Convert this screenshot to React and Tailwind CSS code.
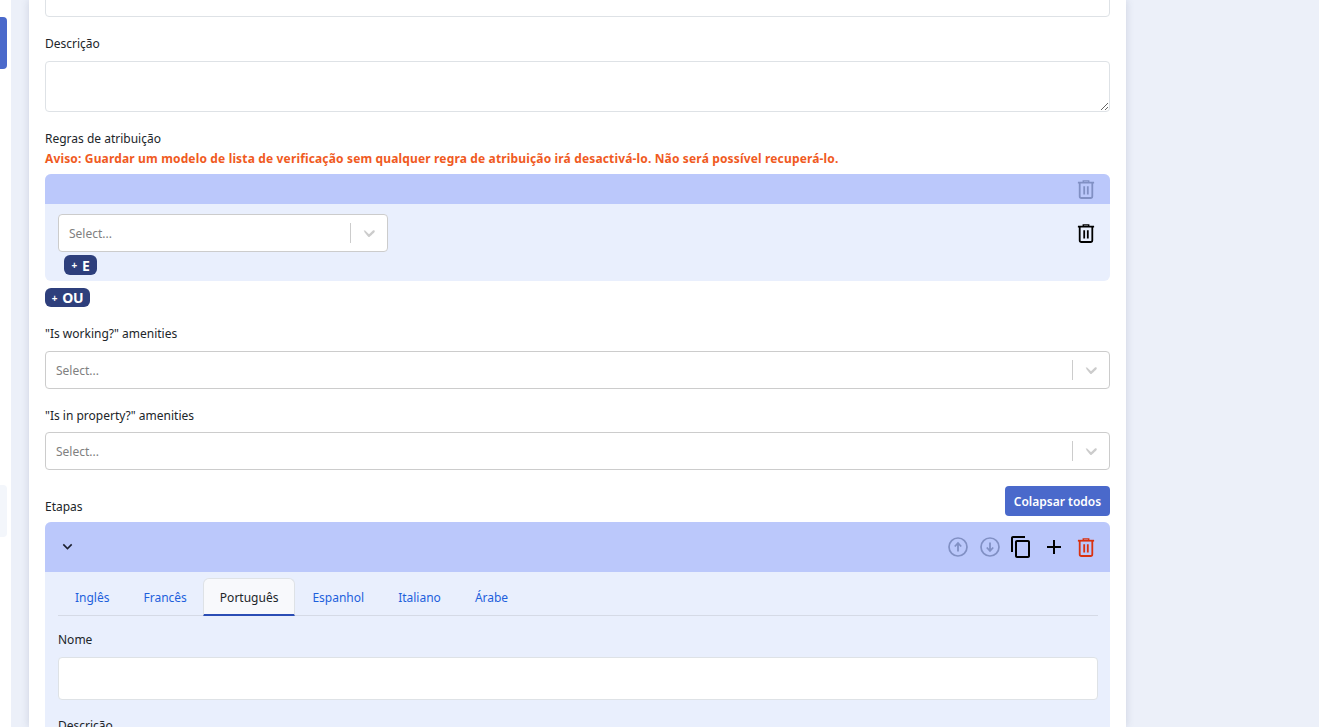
import React from 'react';
import { MdOutlineContentCopy, MdAdd, MdKeyboardArrowDown } from 'react-icons/md';

const font = "font-['Noto_Sans','Open_Sans',sans-serif]";

const TrashIcon = ({ className }) => (
  <svg viewBox="0 0 20 22" fill="none" stroke="currentColor" strokeWidth="2" className={className}>
    <path d="M1 4h18" />
    <path d="M7 4V2h6v2" strokeWidth="1.6" />
    <path d="M3 4v15a2 2 0 0 0 2 2h10a2 2 0 0 0 2-2V4" />
    <path d="M8 8v9M12 8v9" />
  </svg>
);

const CircleArrow = ({ down }) => (
  <svg viewBox="0 0 20 20" fill="none" stroke="currentColor" className="h-5 w-5 text-[#8190c4]">
    <circle cx="10" cy="10" r="9" strokeWidth="1.7" />
    {down ? (
      <path d="M10 5.5v8M6.8 10.5 10 14l3.2-3.5" strokeWidth="1.8" />
    ) : (
      <path d="M10 14.5v-8M6.8 9.5 10 6l3.2 3.5" strokeWidth="1.8" />
    )}
  </svg>
);

const SelectBox = () => (
  <div className="flex h-[38px] w-full items-center rounded border border-[#cccccc] bg-white">
    <span className="flex-1 pt-[2px] pl-[10px] text-xs text-[#808080]">Select...</span>
    <span className="h-5 w-px bg-[#cccccc]" />
    <svg viewBox="0 0 20 20" className="mx-2 h-5 w-5 fill-[#cccccc]">
      <path d="M4.516 7.548c.436-.446 1.043-.481 1.576 0L10 11.295l3.908-3.747c.533-.481 1.141-.446 1.574 0 .436.445.408 1.197 0 1.615-.406.418-4.695 4.502-4.695 4.502a1.095 1.095 0 0 1-1.576 0S5.922 9.581 5.516 9.163c-.409-.418-.436-1.17 0-1.615z" />
    </svg>
  </div>
);

const Label = ({ children, className = '' }) => (
  <label className={`block h-[18px] text-xs leading-[20px] text-[#212529] ${className}`}>{children}</label>
);

const tabs = ['Inglês', 'Francês', 'Português', 'Espanhol', 'Italiano', 'Árabe'];

export default function App() {
  return (
    <div className={`flex h-[727px] overflow-hidden bg-[#ecf0f9] ${font}`}>
      {/* collapsed sidebar */}
      <aside className="flex w-[11px] shrink-0 flex-col bg-white pt-[17px]">
        <div className="h-[52px] w-[7px] rounded-r bg-[#4a69cb]" />
        <div className="mt-[416px] h-[52px] w-[7px] rounded-r bg-[#f3f6fb]" />
      </aside>

      <main className="ml-[18px] h-[727px] w-[1097px] shrink-0 overflow-hidden bg-white px-4 shadow-[0_0_8px_rgba(60,70,110,0.18)]">
        <div className="-mt-6 h-[41px] rounded border border-[#dee2e6] bg-white" />

        <Label className="mt-[17px]">Descrição</Label>
        <textarea className="mt-[9px] block h-[51px] w-full rounded border border-[#dee2e6] bg-white" />

        <Label className="mt-[17px]">Regras de atribuição</Label>
        <p className="mt-[2px] h-[18px] text-xs leading-[20px] font-bold tracking-[0.15px] text-[#f05a22]">
          Aviso: Guardar um modelo de lista de verificação sem qualquer regra de atribuição irá desactivá-lo. Não será possível recuperá-lo.
        </p>

        <section className="mt-[7px] overflow-hidden rounded-md bg-[#e9effd]">
          <div className="flex h-[30px] items-center justify-end bg-[#bbc8fb] pr-[15px]">
            <TrashIcon className="h-5 w-[18px] text-[#8190c4]" />
          </div>
          <div className="flex h-[77px] items-start justify-between pt-[10px] pr-[15px] pl-[13px]">
            <div>
              <div className="w-[330px]">
                <SelectBox />
              </div>
              <button className="mt-[3px] ml-[6px] flex h-5 w-[33px] items-center justify-center gap-[5px] rounded-md bg-[#2e3f7c] pt-px text-sm font-bold tracking-tight text-white">
                <span className="text-[10px]">+</span>E
              </button>
            </div>
            <TrashIcon className="mt-[9px] h-5 w-[18px] text-black" />
          </div>
        </section>

        <button className="mt-[7px] flex h-[19px] w-[45px] items-center justify-center gap-[5px] rounded-md bg-[#2e3f7c] pt-px text-sm font-bold tracking-tight text-white">
          <span className="text-[10px]">+</span>OU
        </button>

        <Label className="mt-[17px]">"Is working?" amenities</Label>
        <div className="mt-[9px]">
          <SelectBox />
        </div>

        <Label className="mt-[17px]">"Is in property?" amenities</Label>
        <div className="mt-[8px]">
          <SelectBox />
        </div>

        <div className="mt-[16px] flex items-end justify-between">
          <Label className="mb-[1px]">Etapas</Label>
          <button className="flex h-[30px] w-[105px] items-center justify-center rounded-sm bg-[#4a69cb] pt-[2px] text-xs font-semibold text-white">
            Colapsar todos
          </button>
        </div>

        <section className="mt-[6px] rounded-t-md bg-[#e9effd]">
          <div className="flex h-[50px] items-center justify-between rounded-t-md bg-[#bbc8fb] pr-[15px] pl-[13px]">
            <MdKeyboardArrowDown className="mb-[2px] h-[19px] w-[19px] text-[#1c2030]" />
            <div className="flex items-center">
              <CircleArrow />
              <span className="ml-3">
                <CircleArrow down />
              </span>
              <MdOutlineContentCopy className="ml-[9px] h-6 w-6 text-black" />
              <MdAdd className="ml-[9px] h-6 w-6 text-black" />
              <TrashIcon className="ml-[11px] h-5 w-[18px] text-[#d9310f]" />
            </div>
          </div>
          <div className="pt-[6px] pr-3 pl-[13px]">
            <div className="flex border-b border-[#d5dae6]">
              {tabs.map(t => (
                t === 'Português' ? (
                  <span key={t} className="-mb-px -ml-px flex h-[38px] items-center rounded-t-md border border-b-2 border-[#dee2e6] border-b-[#2b4db5] bg-[#f8f9fc] px-4 pt-[2px] text-xs text-[#212529]">{t}</span>
                ) : (
                  <span key={t} className="flex h-[37px] items-center px-[17px] pt-[2px] text-xs text-[#1d5fdc]">{t}</span>
                )
              ))}
            </div>
            <Label className="mt-[14px]">Nome</Label>
            <div className="mt-[9px] h-[43px] rounded border border-[#dee2e6] bg-white" />
            <Label className="mt-[16px]">Descrição</Label>
          </div>
        </section>
      </main>
    </div>
  );
}
